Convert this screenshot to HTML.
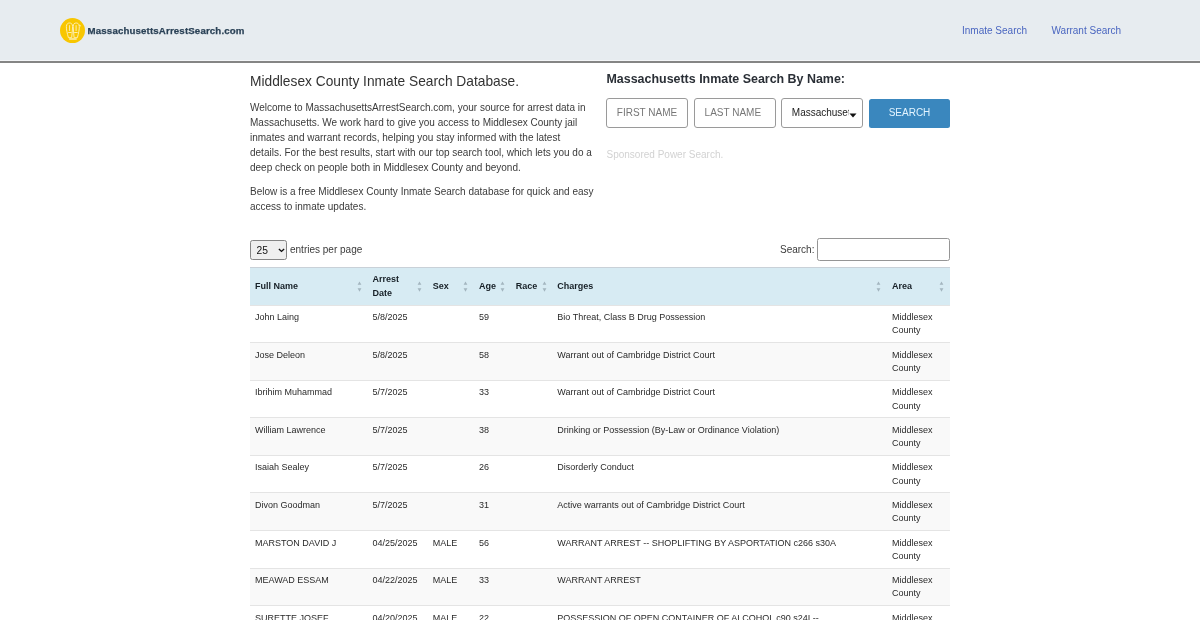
<!DOCTYPE html>
<html>
<head>
<meta charset="utf-8">
<style>
html,body{margin:0;padding:0;}
body{width:1200px;height:620px;overflow:hidden;will-change:transform;background:#fff;font-family:"Liberation Sans",sans-serif;color:#444;position:relative;}
.hdr{position:absolute;left:0;top:0;width:1200px;height:60px;background:#e7ecf0;border-bottom:1px solid #f3f5f7;}
.hdr2{position:absolute;left:0;top:60.8px;width:1200px;height:2.2px;background:#858585;}
.logo-c{position:absolute;left:59.9px;top:18.2px;}
.logo-t{position:absolute;left:87.6px;top:25.3px;font-size:9.7px;font-weight:700;color:#2b4257;letter-spacing:0.14px;-webkit-text-stroke:0.25px #2b4257;white-space:nowrap;line-height:12px;}
.nav{position:absolute;top:25.3px;font-size:10px;color:#4a66c0;white-space:nowrap;line-height:12px;}
.left{position:absolute;left:250px;top:0;width:350px;}
.h1{position:absolute;left:250px;top:74px;font-size:13.75px;color:#333;white-space:nowrap;line-height:16px;}
.p{position:absolute;left:250px;font-size:10px;line-height:15px;color:#3b3b3b;white-space:nowrap;}
.h2{position:absolute;left:606.5px;top:71.5px;font-size:12.45px;font-weight:700;color:#2a2f36;white-space:nowrap;line-height:15px;}
.inp{position:absolute;top:98px;height:29.5px;width:81.5px;box-sizing:border-box;border:1px solid #9a9a9a;border-radius:3px;background:#fff;font-size:10px;line-height:27.5px;color:#777;white-space:nowrap;overflow:hidden;}
.btn{position:absolute;left:869px;top:98.5px;width:81px;height:29.5px;background:#3a87be;border-radius:2.5px;color:#e2f4ff;font-size:10px;line-height:28px;text-align:center;}
.spons{position:absolute;left:606.5px;top:149px;font-size:10px;color:#d2d2d2;line-height:12px;white-space:nowrap;}

.sel25{position:absolute;left:250px;top:240px;width:37px;height:19.5px;box-sizing:border-box;border:1px solid #858585;border-radius:2.5px;background:#efefef;}
.sel25 span{position:absolute;left:5.5px;top:4px;font-size:10.3px;line-height:12px;color:#111;}
.sel25 svg{position:absolute;left:26.5px;top:7px;}
.epp{position:absolute;left:290px;top:244px;font-size:10px;line-height:12px;color:#3b3b3b;white-space:nowrap;}
.slbl{position:absolute;left:780px;top:244px;font-size:10px;line-height:12px;color:#3b3b3b;white-space:nowrap;}
.sinp{position:absolute;left:817px;top:238px;width:133px;height:22.5px;box-sizing:border-box;border:1px solid #959595;border-radius:2.5px;background:#fff;}
.tw{position:absolute;left:250px;top:267px;width:700px;height:360px;}
.th{position:absolute;left:0;top:0;width:700px;height:38px;box-sizing:border-box;background:#d7ebf3;border-top:1px solid #c9d1d8;}
.hc{position:absolute;top:11.5px;font-size:9px;line-height:13.5px;font-weight:700;color:#172027;white-space:nowrap;}
.hc2{position:absolute;top:4px;font-size:9px;line-height:14px;font-weight:700;color:#172027;white-space:nowrap;}
.si{position:absolute;top:12.8px;}
.tr{position:absolute;left:0;width:700px;height:37.55px;box-sizing:border-box;border-top:1px solid #e4e4e4;}
.tr.even{background:#f9f9f9;}
.tr.odd{background:#fff;}
.td{position:absolute;top:5.5px;font-size:9px;line-height:13.2px;color:#2a2a2a;white-space:nowrap;}
</style>
</head>
<body>
<div class="hdr"></div><div class="hdr2"></div>
<svg class="logo-c" width="26" height="26" viewBox="0 0 26 26"><circle cx="12.5" cy="12.6" r="12.5" fill="#f8c600"/><g fill="none" stroke="#fdeeb0" stroke-width="1" stroke-linejoin="round" stroke-linecap="round"><path d="M8.3 19.3 C7.3 15.5 6.2 11.5 6.4 8.4 C6.6 5.6 8.2 5 9.5 5 C11 5 12.6 5.7 12.6 8.6 C12.6 12 11.9 15.8 11.7 19.3 Z"/><path d="M17.5 19.3 C18.5 15.5 19.4 11.5 19.3 8.4 C19.1 5.6 17.5 5 16.2 5 C14.7 5 13.2 5.7 13.2 8.6 C13.2 12 13.9 15.8 14.1 19.3 Z"/><path d="M9.6 7.6 L9.6 12.5 M16.1 7.6 L16.1 12.5 M8.6 14.5 L11.2 14.5 M14.6 14.5 L17.2 14.5"/><path d="M9.6 21 L16.2 21" stroke-width="1.3"/><path d="M19.4 7.2 L20.6 7.9"/></g></svg>
<div class="logo-t">MassachusettsArrestSearch.com</div>
<div class="nav" style="left:962px">Inmate Search</div>
<div class="nav" style="left:1051.5px">Warrant Search</div>

<div class="h1">Middlesex County Inmate Search Database.</div>
<div class="p" style="top:100px">Welcome to MassachusettsArrestSearch.com, your source for arrest data in<br>Massachusetts. We work hard to give you access to Middlesex County jail<br>inmates and warrant records, helping you stay informed with the latest<br>details. For the best results, start with our top search tool, which lets you do a<br>deep check on people both in Middlesex County and beyond.</div>
<div class="p" style="top:184px">Below is a free Middlesex County Inmate Search database for quick and easy<br>access to inmate updates.</div>

<div class="h2">Massachusetts Inmate Search By Name:</div>
<div class="inp" style="left:606px;padding-left:9.8px">FIRST NAME</div>
<div class="inp" style="left:694px;padding-left:9.6px">LAST NAME</div>
<div class="inp" style="left:781px;padding-left:0;color:#222"><span style="position:absolute;left:9.8px;top:0;width:57.5px;overflow:hidden">Massachusetts</span><svg style="position:absolute;left:67px;top:13.5px" width="8" height="5" viewBox="0 0 8 5"><path d="M0.5 0.5 L7.5 0.5 L4 4.5 Z" fill="#111"/></svg></div>
<div class="btn">SEARCH</div>
<div class="spons">Sponsored Power Search.</div>
<div class="sel25"><span>25</span><svg width="7" height="5" viewBox="0 0 7 5"><path d="M0.9 0.9 L3.5 3.4 L6.1 0.9" fill="none" stroke="#111" stroke-width="1.4"/></svg></div>
<div class="epp">entries per page</div>
<div class="slbl">Search:</div>
<div class="sinp"></div>
<div class="tw">
<div class="th">
<div class="hc" style="left:5.0px">Full Name</div>
<svg class="si" style="left:106.90px" width="5" height="12" viewBox="0 0 5 12"><path d="M2.5 0.5 L4.4 3.7 L0.6 3.7 Z M0.6 7.3 L4.4 7.3 L2.5 10.8 Z" fill="#a3b5bf"/></svg>
<div class="hc2" style="left:122.5px">Arrest<br>Date</div>
<svg class="si" style="left:167.20px" width="5" height="12" viewBox="0 0 5 12"><path d="M2.5 0.5 L4.4 3.7 L0.6 3.7 Z M0.6 7.3 L4.4 7.3 L2.5 10.8 Z" fill="#a3b5bf"/></svg>
<div class="hc" style="left:182.8px">Sex</div>
<svg class="si" style="left:213.40px" width="5" height="12" viewBox="0 0 5 12"><path d="M2.5 0.5 L4.4 3.7 L0.6 3.7 Z M0.6 7.3 L4.4 7.3 L2.5 10.8 Z" fill="#a3b5bf"/></svg>
<div class="hc" style="left:229.0px">Age</div>
<svg class="si" style="left:250.10px" width="5" height="12" viewBox="0 0 5 12"><path d="M2.5 0.5 L4.4 3.7 L0.6 3.7 Z M0.6 7.3 L4.4 7.3 L2.5 10.8 Z" fill="#a3b5bf"/></svg>
<div class="hc" style="left:265.7px">Race</div>
<svg class="si" style="left:292.10px" width="5" height="12" viewBox="0 0 5 12"><path d="M2.5 0.5 L4.4 3.7 L0.6 3.7 Z M0.6 7.3 L4.4 7.3 L2.5 10.8 Z" fill="#a3b5bf"/></svg>
<div class="hc" style="left:307.3px">Charges</div>
<svg class="si" style="left:626.40px" width="5" height="12" viewBox="0 0 5 12"><path d="M2.5 0.5 L4.4 3.7 L0.6 3.7 Z M0.6 7.3 L4.4 7.3 L2.5 10.8 Z" fill="#a3b5bf"/></svg>
<div class="hc" style="left:642.0px">Area</div>
<svg class="si" style="left:689.40px" width="5" height="12" viewBox="0 0 5 12"><path d="M2.5 0.5 L4.4 3.7 L0.6 3.7 Z M0.6 7.3 L4.4 7.3 L2.5 10.8 Z" fill="#a3b5bf"/></svg>
</div>
<div class="tr odd" style="top:37.70px">
<div class="td" style="left:5.0px">John Laing</div>
<div class="td" style="left:122.5px">5/8/2025</div>
<div class="td" style="left:229.0px">59</div>
<div class="td" style="left:307.3px">Bio Threat, Class B Drug Possession</div>
<div class="td" style="left:642.0px">Middlesex<br>County</div>
</div>
<div class="tr even" style="top:75.25px">
<div class="td" style="left:5.0px">Jose Deleon</div>
<div class="td" style="left:122.5px">5/8/2025</div>
<div class="td" style="left:229.0px">58</div>
<div class="td" style="left:307.3px">Warrant out of Cambridge District Court</div>
<div class="td" style="left:642.0px">Middlesex<br>County</div>
</div>
<div class="tr odd" style="top:112.80px">
<div class="td" style="left:5.0px">Ibrihim Muhammad</div>
<div class="td" style="left:122.5px">5/7/2025</div>
<div class="td" style="left:229.0px">33</div>
<div class="td" style="left:307.3px">Warrant out of Cambridge District Court</div>
<div class="td" style="left:642.0px">Middlesex<br>County</div>
</div>
<div class="tr even" style="top:150.35px">
<div class="td" style="left:5.0px">William Lawrence</div>
<div class="td" style="left:122.5px">5/7/2025</div>
<div class="td" style="left:229.0px">38</div>
<div class="td" style="left:307.3px">Drinking or Possession (By-Law or Ordinance Violation)</div>
<div class="td" style="left:642.0px">Middlesex<br>County</div>
</div>
<div class="tr odd" style="top:187.90px">
<div class="td" style="left:5.0px">Isaiah Sealey</div>
<div class="td" style="left:122.5px">5/7/2025</div>
<div class="td" style="left:229.0px">26</div>
<div class="td" style="left:307.3px">Disorderly Conduct</div>
<div class="td" style="left:642.0px">Middlesex<br>County</div>
</div>
<div class="tr even" style="top:225.45px">
<div class="td" style="left:5.0px">Divon Goodman</div>
<div class="td" style="left:122.5px">5/7/2025</div>
<div class="td" style="left:229.0px">31</div>
<div class="td" style="left:307.3px">Active warrants out of Cambridge District Court</div>
<div class="td" style="left:642.0px">Middlesex<br>County</div>
</div>
<div class="tr odd" style="top:263.00px">
<div class="td" style="left:5.0px">MARSTON DAVID J</div>
<div class="td" style="left:122.5px">04/25/2025</div>
<div class="td" style="left:182.8px">MALE</div>
<div class="td" style="left:229.0px">56</div>
<div class="td" style="left:307.3px">WARRANT ARREST -- SHOPLIFTING BY ASPORTATION c266 s30A</div>
<div class="td" style="left:642.0px">Middlesex<br>County</div>
</div>
<div class="tr even" style="top:300.55px">
<div class="td" style="left:5.0px">MEAWAD ESSAM</div>
<div class="td" style="left:122.5px">04/22/2025</div>
<div class="td" style="left:182.8px">MALE</div>
<div class="td" style="left:229.0px">33</div>
<div class="td" style="left:307.3px">WARRANT ARREST</div>
<div class="td" style="left:642.0px">Middlesex<br>County</div>
</div>
<div class="tr odd" style="top:338.10px">
<div class="td" style="left:5.0px">SURETTE JOSEF</div>
<div class="td" style="left:122.5px">04/20/2025</div>
<div class="td" style="left:182.8px">MALE</div>
<div class="td" style="left:229.0px">22</div>
<div class="td" style="left:307.3px">POSSESSION OF OPEN CONTAINER OF ALCOHOL c90 s24I --</div>
<div class="td" style="left:642.0px">Middlesex<br>County</div>
</div>
</div>
</body>
</html>
